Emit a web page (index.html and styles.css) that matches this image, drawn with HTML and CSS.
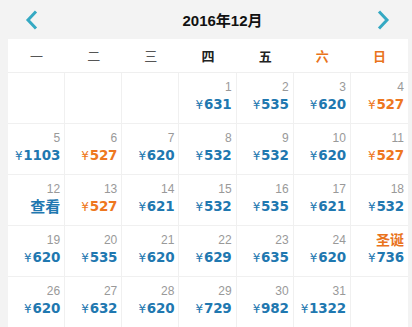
FILE: index.html
```html
<!DOCTYPE html>
<html lang="zh">
<head>
<meta charset="utf-8">
<link rel="stylesheet" href="styles.css">
</head>
<body>
<div class="header">
  <svg class="nav" width="14" height="20" viewBox="0 0 14 20"><path d="M11 1.5 L3 10 L11 18.5" fill="none" stroke="#35a9c3" stroke-width="3"/></svg>
  <div class="title">2016年12月</div>
  <svg class="nav" width="14" height="20" viewBox="0 0 14 20"><path d="M3 1.5 L11 10 L3 18.5" fill="none" stroke="#35a9c3" stroke-width="3"/></svg>
</div>
<div class="cal">
  <div class="weekdays">
    <div class="wd">一</div><div class="wd">二</div><div class="wd">三</div><div class="wd strong">四</div><div class="wd strong">五</div><div class="wd we">六</div><div class="wd we">日</div>
  </div>
  <div class="days">
    <div class="cell"></div><div class="cell"></div><div class="cell"></div>
    <div class="cell"><span class="num">1</span><span class="price"><i>¥</i>631</span></div>
    <div class="cell"><span class="num">2</span><span class="price"><i>¥</i>535</span></div>
    <div class="cell"><span class="num">3</span><span class="price"><i>¥</i>620</span></div>
    <div class="cell"><span class="num">4</span><span class="price low"><i>¥</i>527</span></div>

    <div class="cell"><span class="num">5</span><span class="price"><i>¥</i>1103</span></div>
    <div class="cell"><span class="num">6</span><span class="price low"><i>¥</i>527</span></div>
    <div class="cell"><span class="num">7</span><span class="price"><i>¥</i>620</span></div>
    <div class="cell"><span class="num">8</span><span class="price"><i>¥</i>532</span></div>
    <div class="cell"><span class="num">9</span><span class="price"><i>¥</i>532</span></div>
    <div class="cell"><span class="num">10</span><span class="price"><i>¥</i>620</span></div>
    <div class="cell"><span class="num">11</span><span class="price low"><i>¥</i>527</span></div>

    <div class="cell"><span class="num">12</span><span class="price view">查看</span></div>
    <div class="cell"><span class="num">13</span><span class="price low"><i>¥</i>527</span></div>
    <div class="cell"><span class="num">14</span><span class="price"><i>¥</i>621</span></div>
    <div class="cell"><span class="num">15</span><span class="price"><i>¥</i>532</span></div>
    <div class="cell"><span class="num">16</span><span class="price"><i>¥</i>535</span></div>
    <div class="cell"><span class="num">17</span><span class="price"><i>¥</i>621</span></div>
    <div class="cell"><span class="num">18</span><span class="price"><i>¥</i>532</span></div>

    <div class="cell"><span class="num">19</span><span class="price"><i>¥</i>620</span></div>
    <div class="cell"><span class="num">20</span><span class="price"><i>¥</i>535</span></div>
    <div class="cell"><span class="num">21</span><span class="price"><i>¥</i>620</span></div>
    <div class="cell"><span class="num">22</span><span class="price"><i>¥</i>629</span></div>
    <div class="cell"><span class="num">23</span><span class="price"><i>¥</i>635</span></div>
    <div class="cell"><span class="num">24</span><span class="price"><i>¥</i>620</span></div>
    <div class="cell"><span class="num holiday">圣诞</span><span class="price"><i>¥</i>736</span></div>

    <div class="cell"><span class="num">26</span><span class="price"><i>¥</i>620</span></div>
    <div class="cell"><span class="num">27</span><span class="price"><i>¥</i>632</span></div>
    <div class="cell"><span class="num">28</span><span class="price"><i>¥</i>620</span></div>
    <div class="cell"><span class="num">29</span><span class="price"><i>¥</i>729</span></div>
    <div class="cell"><span class="num">30</span><span class="price"><i>¥</i>982</span></div>
    <div class="cell"><span class="num">31</span><span class="price"><i>¥</i>1322</span></div>
    <div class="cell"></div>
  </div>
</div>
</body>
</html>
```
FILE: styles.css
```css
html, body {
  margin: 0;
  padding: 0;
  background: #f3f3f3;
  font-family: "Liberation Sans", "Noto Sans CJK SC", sans-serif;
  overflow: hidden;
}
.header {
  height: 39px;
  display: flex;
  align-items: center;
  justify-content: space-between;
  padding: 0 22px 0 25px;
}
.title {
  font-weight: bold;
  font-size: 15px;
  color: #111;
  padding-left: 30px;
}
.nav { display: block; }
.cal {
  margin: 0 4px 0 8px;
  background: #fff;
}
.weekdays {
  display: grid;
  grid-template-columns: repeat(7, 1fr);
  height: 33px;
  border-bottom: 1px solid #efefef;
}
.wd {
  display: flex;
  align-items: center;
  justify-content: center;
  font-size: 13px;
  color: #555;
}
.wd.strong { color: #222; font-weight: bold; }
.wd.we { color: #e9731c; font-weight: bold; }
.days {
  display: grid;
  grid-template-columns: repeat(7, 1fr);
  grid-auto-rows: 51px;
}
.cell {
  border-right: 1px solid #f0f0f0;
  border-bottom: 1px solid #f0f0f0;
  display: flex;
  flex-direction: column;
  align-items: flex-end;
  padding: 6px 4px 0 0;
}
.cell:nth-child(7n) { border-right: none; }
.num {
  font-size: 12px;
  line-height: 16px;
  color: #999;
}
.num.holiday {
  color: #e9731c;
  font-weight: bold;
  font-size: 14px;
}
.price {
  font-family: "DejaVu Sans", "Noto Sans CJK SC", sans-serif;
  font-weight: bold;
  font-size: 13.5px;
  line-height: 18px;
  color: #1f78b0;
  letter-spacing: -0.2px;
}
.price i {
  font-style: normal;
  font-weight: normal;
  font-size: 12px;
  margin-right: 1px;
}
.price.low { color: #ee7720; }
.price.view {
  font-family: "Noto Sans CJK SC", sans-serif;
  font-size: 15px;
  letter-spacing: 0;
}
```
